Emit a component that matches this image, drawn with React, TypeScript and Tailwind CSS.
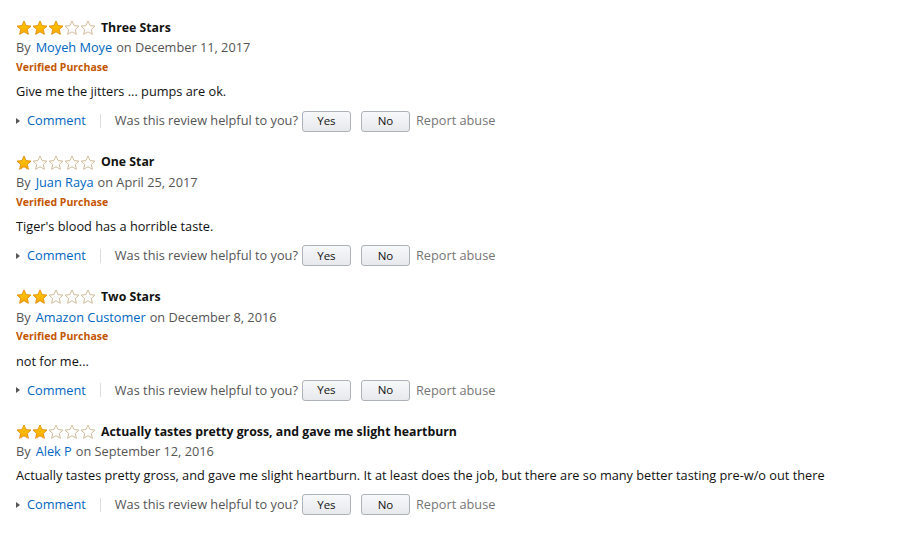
import React from "react";

type Review = {
  stars: number;
  title: string;
  author: string;
  date: string;
  verified: boolean;
  body: string;
};

const reviews: Review[] = [
  {
    stars: 3,
    title: "Three Stars",
    author: "Moyeh Moye",
    date: "December 11, 2017",
    verified: true,
    body: "Give me the jitters ... pumps are ok.",
  },
  {
    stars: 1,
    title: "One Star",
    author: "Juan Raya",
    date: "April 25, 2017",
    verified: true,
    body: "Tiger's blood has a horrible taste.",
  },
  {
    stars: 2,
    title: "Two Stars",
    author: "Amazon Customer",
    date: "December 8, 2016",
    verified: true,
    body: "not for me...",
  },
  {
    stars: 2,
    title: "Actually tastes pretty gross, and gave me slight heartburn",
    author: "Alek P",
    date: "September 12, 2016",
    verified: false,
    body: "Actually tastes pretty gross, and gave me slight heartburn. It at least does the job, but there are so many better tasting pre-w/o out there",
  },
];

function Star({ filled }: { filled: boolean }) {
  return (
    <svg width="16" height="16" viewBox="0 0 16 16">
      <defs>
        <linearGradient id="starfill" x1="0" y1="0" x2="0" y2="1">
          <stop offset="0" stopColor="#ffce00" />
          <stop offset="1" stopColor="#ffa700" />
        </linearGradient>
      </defs>
      <polygon
        points="8,1 10.1,5.6 15,6.1 11.3,9.4 12.4,14.3 8,11.8 3.6,14.3 4.7,9.4 1,6.1 5.9,5.6"
        fill={filled ? "url(#starfill)" : "#ffffff"}
        stroke={filled ? "#e28a0b" : "#c9b48f"}
        strokeWidth="0.9"
        strokeLinejoin="round"
      />
    </svg>
  );
}

function Stars({ count }: { count: number }) {
  return (
    <div className="flex items-center">
      {[0, 1, 2, 3, 4].map((i) => (
        <Star key={i} filled={i < count} />
      ))}
    </div>
  );
}

function Btn({ label }: { label: string }) {
  return (
    <button className="h-[21px] w-[49px] rounded-[3px] border border-[#adb1b8] bg-gradient-to-b from-[#f7f8fa] to-[#e7e9ec] text-[11.5px] text-[#111] leading-none">
      {label}
    </button>
  );
}

function ReviewItem({ r }: { r: Review }) {
  return (
    <div className="mb-[20.6px]">
      <div className="flex h-[20px] items-center gap-[5px]">
        <Stars count={r.stars} />
        <span className="font-bold text-[12.3px] text-[#111]">{r.title}</span>
      </div>
      <div className="flex h-[20px] items-center text-[12.75px] text-[#555]">
        <span>By</span>
        <span className="ml-[5px] text-[#0066c0]">{r.author}</span>
        <span className="ml-[4px]">on {r.date}</span>
      </div>
      {r.verified && (
        <div className="flex h-[20px] items-center text-[10.5px] font-bold text-[#c45500]">
          Verified Purchase
        </div>
      )}
      <div className="mt-[4px] flex h-[20px] items-center text-[12.75px] text-[#111]">
        {r.body}
      </div>
      <div className="mt-[8px] flex h-[22px] items-center text-[12.75px]">
        <span className="mr-[7px] inline-block h-0 w-0 border-y-[3px] border-l-[4px] border-y-transparent border-l-[#555]" />
        <span className="text-[#0066c0]">Comment</span>
        <span className="mx-[14px] h-[14px] w-px bg-[#ddd]" />
        <span className="mr-[4px] text-[#555]">Was this review helpful to you?</span>
        <Btn label="Yes" />
        <span className="w-[10px]" />
        <Btn label="No" />
        <span className="ml-[6px] text-[#767676]">Report abuse</span>
      </div>
    </div>
  );
}

export default function App() {
  return (
    <div
      className="min-h-screen bg-white pl-[16px] pt-[18px]"
      style={{ fontFamily: '"Open Sans", Arial, sans-serif' }}
    >
      {reviews.map((r, i) => (
        <ReviewItem key={i} r={r} />
      ))}
    </div>
  );
}
